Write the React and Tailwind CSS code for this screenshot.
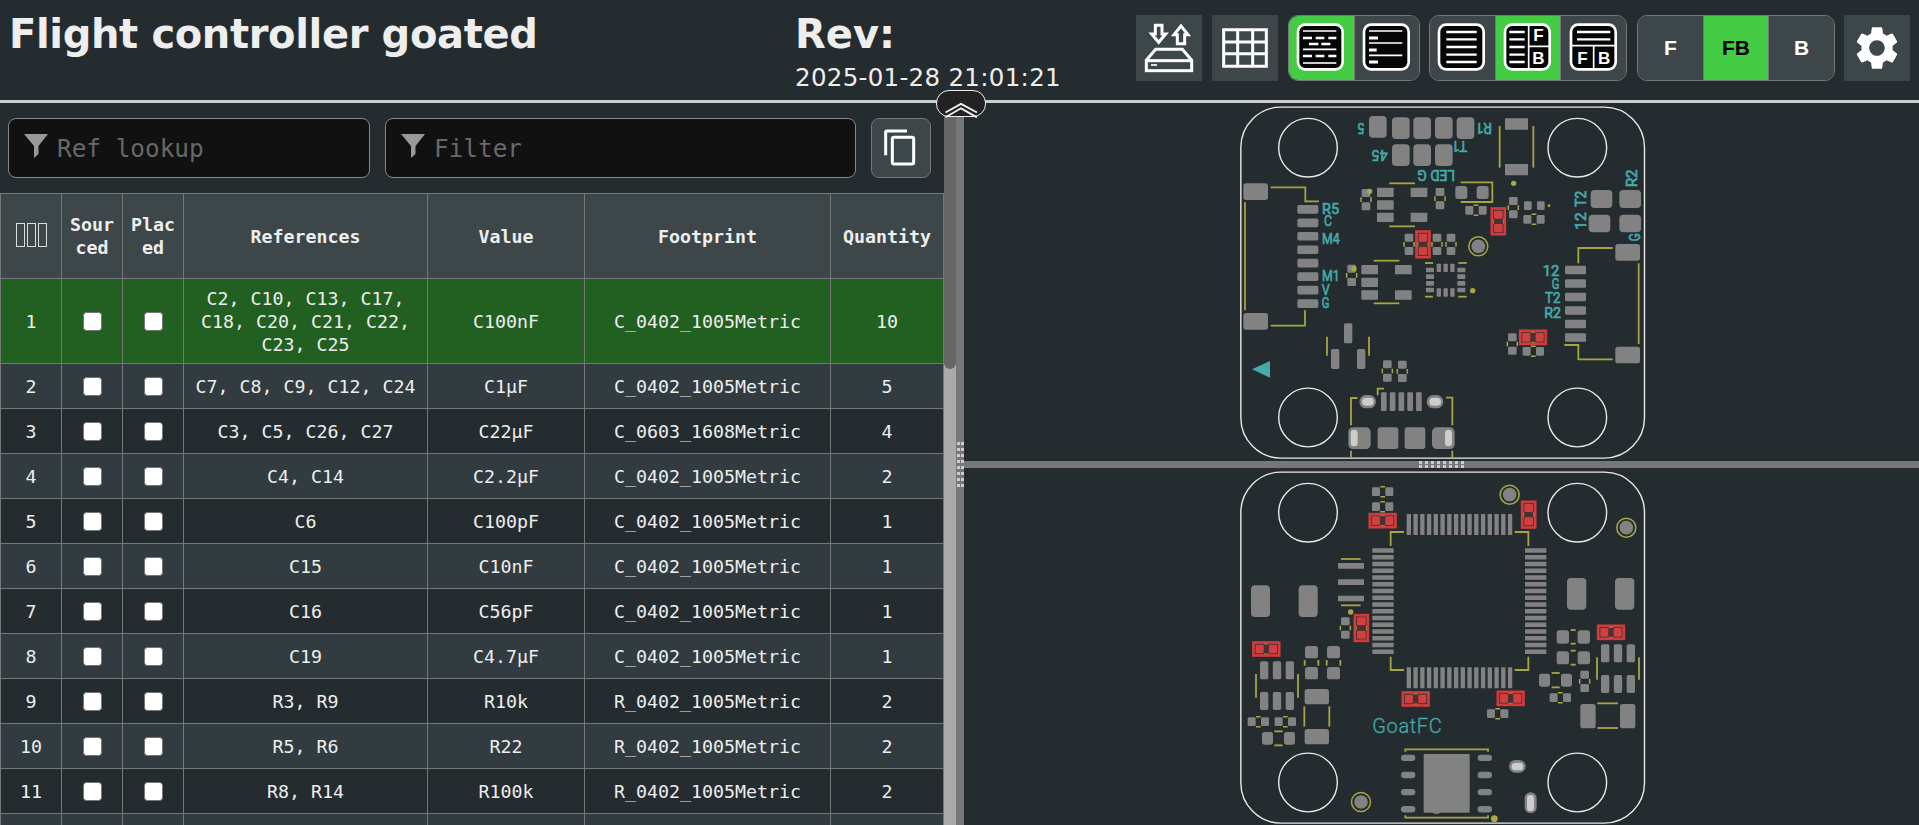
import { MdSettings } from "react-icons/md";

const rows = [
  ["C2, C10, C13, C17, C18, C20, C21, C22, C23, C25", "C100nF", "C_0402_1005Metric", 10],
  ["C7, C8, C9, C12, C24", "C1µF", "C_0402_1005Metric", 5],
  ["C3, C5, C26, C27", "C22µF", "C_0603_1608Metric", 4],
  ["C4, C14", "C2.2µF", "C_0402_1005Metric", 2],
  ["C6", "C100pF", "C_0402_1005Metric", 1],
  ["C15", "C10nF", "C_0402_1005Metric", 1],
  ["C16", "C56pF", "C_0402_1005Metric", 1],
  ["C19", "C4.7µF", "C_0402_1005Metric", 1],
  ["R3, R9", "R10k", "R_0402_1005Metric", 2],
  ["R5, R6", "R22", "R_0402_1005Metric", 2],
  ["R8, R14", "R100k", "R_0402_1005Metric", 2],
];

const range = (n, f) => Array.from({ length: n }, (_, i) => f(i));

/* Board data. Pads and holes: [x, y, w, h, radius]. Silk: polyline points. */
const front = {
  pads: [
    [417, 48, 53, 65, 12], [486, 52, 53, 65, 12], [550, 52, 53, 65, 12], [615, 51, 53, 65, 12], [680, 52, 53, 65, 12],
    [486, 133, 53, 65, 12], [550, 133, 53, 65, 12], [615, 133, 53, 65, 12],
    [40, 250, 74, 50, 8], [40, 639, 74, 50, 8],
    ...range(8, (i) => [202, 315 + i * 40.4, 63, 26, 5]),
    [441, 263, 50, 28, 2], [441, 301, 50, 28, 2], [441, 338, 50, 28, 2], [542, 263, 50, 28, 2], [542, 338, 50, 28, 2],
    [394, 495, 50, 28, 2], [394, 533, 50, 28, 2], [394, 571, 50, 28, 2], [495, 495, 50, 28, 2], [495, 571, 50, 28, 2],
    [882, 304, 23, 26, 4], [921, 304, 23, 26, 4],
    [676, 258, 36, 39, 8], [740, 258, 36, 39, 8],
    [825, 55, 69, 34, 1], [825, 192, 69, 34, 1],
    [1082, 270, 65, 54, 12], [1168, 270, 65, 54, 12], [1076, 344, 65, 53, 12], [1168, 344, 65, 53, 12],
    [1156, 432, 74, 50, 8], [1156, 740, 74, 50, 8],
    ...range(6, (i) => [1005, 497 + i * 40.5, 63, 26, 4]),
    ...range(4, (i) => [588, 503 + i * 20, 24, 14, 2]),
    ...range(4, (i) => [682, 503 + i * 20, 24, 14, 2]),
    ...range(3, (i) => [620 + i * 20.4, 491, 13, 25, 2]),
    ...range(3, (i) => [620 + i * 20.4, 565, 13, 25, 2]),
    [342, 670, 25, 60, 5], [303, 747, 25, 60, 5], [381, 747, 25, 60, 5],
    [388, 885, 50, 40, 20], [590, 885, 50, 40, 20],
    ...range(5, (i) => [453 + i * 26.3, 877, 17, 56, 3]),
    [355, 982, 67, 65, 14], [443, 982, 62, 65, 8], [524, 982, 62, 65, 8], [606, 982, 68, 65, 14],
  ],
  holes: [[396, 893, 35, 24, 12], [598, 893, 35, 24, 12], [362, 989, 21, 50, 10], [645, 989, 21, 50, 10]],
  silk: [
    "478,250 555,250", "478,379 555,379", "431,482 508,482", "431,610 508,610",
    "692,247 787,247 787,306 692,306",
    "809,78 809,203", "910,78 910,203",
    "1045,490 1045,444 1148,444", "1226,490 1226,732", "1003,735 1045,735 1045,778 1148,778",
    "122,262 226,262 226,304 267,304", "45,307 45,631", "225,631 225,677 122,677",
    "585,489 609,489", "685,489 710,489", "585,590 609,590", "685,590 710,590",
    "291,710 291,767", "417,710 417,767",
    "382,894 363,894 363,976", "363,1052 363,1072", "462,866 443,866 443,886",
    "648,893 667,893 667,976", "667,1052 667,1072",
  ],
  dots: [[419, 274, 8], [372, 506, 8], [957, 317, 4], [851, 250, 8], [728, 572, 8]],
  fiducials: [[745, 439]],
  vertical: [[408, 299], [365, 526], [537, 433], [621, 433], [663, 433], [630, 296], [850, 323], [472, 813], [517, 814], [847, 732]],
  horizontal: [[738, 331], [912, 358], [910, 754]],
  hotV: [[579, 433], [805, 364]],
  hotH: [[909, 712]],
};

const back = {
  pads: [
    ...range(16, (i) => [530 + i * 20.25, 147, 13, 63, 1]),
    ...range(16, (i) => [530 + i * 20.25, 607, 13, 63, 1]),
    ...range(16, (i) => [427, 250 + i * 20.25, 64, 13, 1]),
    ...range(16, (i) => [885, 250 + i * 20.25, 64, 13, 1]),
    [324, 294, 78, 17, 1], [324, 343, 78, 17, 1], [324, 392, 78, 17, 1],
    [63, 361, 57, 95, 12], [206, 361, 57, 95, 12],
    [225, 543, 39, 37, 8], [225, 606, 39, 37, 8], [291, 543, 39, 37, 8], [291, 606, 39, 37, 8],
    ...range(3, (i) => [90 + i * 38.5, 589, 25, 54, 5]),
    ...range(3, (i) => [90 + i * 38.5, 681, 25, 54, 5]),
    [96, 801, 33, 38, 7], [162, 801, 33, 38, 7],
    [224, 672, 73, 46, 8], [224, 792, 73, 46, 8],
    ...range(4, (i) => [513, 869 + i * 51.4, 43, 19, 9.5]),
    ...range(4, (i) => [743, 869 + i * 51.4, 43, 19, 9.5]),
    [581, 867, 138, 176, 0], [609, 1038, 20, 8, 4],
    [837, 885, 50, 38, 19], [884, 982, 36, 63, 18],
    [1011, 339, 58, 95, 12], [1155, 339, 58, 95, 12],
    [980, 496, 37, 40, 8], [1043, 496, 37, 40, 8], [980, 559, 37, 39, 8], [1043, 559, 37, 39, 8],
    [927, 626, 33, 39, 7], [993, 626, 33, 39, 7],
    ...range(3, (i) => [1113 + i * 38.5, 538, 25, 54, 5]),
    ...range(3, (i) => [1113 + i * 38.5, 630, 25, 54, 5]),
    [1051, 717, 46, 73, 8], [1170, 717, 46, 73, 8],
  ],
  holes: [[845, 893, 35, 23, 11], [891, 990, 21, 48, 10]],
  silk: [
    "522,201 482,201 482,243", "854,201 895,201 895,243", "482,575 482,615 522,615", "895,575 895,615 854,615",
    "333,282 392,282", "333,421 392,421",
    "224,585 224,602", "265,585 265,602", "290,585 290,602", "331,585 331,602",
    "78,627 78,698", "204,627 204,698", "133,799 158,799", "133,841 158,841",
    "223,724 223,785", "298,724 298,785",
    "526,860 526,853 774,853 774,860", "526,1051 526,1058 774,1058 774,1051",
    "1022,495 1037,495", "1022,536 1037,536", "1022,557 1037,557", "1022,599 1037,599",
    "965,624 989,624", "965,667 989,667",
    "1101,577 1101,644", "1227,577 1227,644", "1102,715 1164,715", "1102,789 1164,789",
  ],
  dots: [[362, 441, 8], [793, 1061, 10]],
  fiducials: [[393, 1011], [839, 89], [1189, 188]],
  vertical: [[346, 489], [1064, 649]],
  horizontal: [[458, 80], [458, 125], [85, 770], [166, 770], [803, 746], [991, 698]],
  hotV: [[394, 489], [896, 149]],
  hotH: [[458, 167], [109, 552], [557, 702], [842, 700], [1143, 502]],
};

/* Silkscreen labels: [text, left, baseline, width, rotation, x offset] */
const labels = [
  ["R5", 276, 341, 51, 0], ["C", 282, 377, 24, 0], ["M4", 276, 431, 53, 0], ["M1", 276, 543, 53, 0],
  ["V", 275, 585, 24, 0], ["G", 275, 624, 23, 0],
  ["12", 323, 528, 50, 0, 615], ["G", 350, 568, 23, 0, 615], ["T2", 330, 610, 46, 0, 615], ["R2", 328, 653, 50, 0, 615],
  ["5", 404, 69, 21, 180], ["45", 473, 151, 47, 180], ["LED G", 675, 210, 113, 180],
  ["R1", 171, 68, 49, 180, 615], ["T1", 97, 123, 46, 180, 615],
  ["R2", 606, 262, 54, -90, 615], ["T2", 454, 320, 48, -90, 615], ["12", 454, 389, 52, -90, 615], ["G", 616, 424, 24, -90, 615],
];

function Chip({ cx, cy, rot, hot }) {
  const c = hot ? "#d04040" : "#828282";
  return (
    <g transform={`translate(${cx} ${cy}) rotate(${rot})`}>
      {hot && <rect x="-19.5" y="-38.5" width="39" height="77" fill="#d04040" fillOpacity="0.22" stroke="#d03c3c" strokeWidth="8" />}
      <rect x="-13" y="-32" width="26" height="24" rx="4" fill={c} />
      <rect x="-13" y="8" width="26" height="24" rx="4" fill={c} />
      <path d="M-15 -7V7M15 -7V7" stroke="#a8a83f" strokeWidth={hot ? 3 : 4.5} opacity={hot ? 0.7 : 1} />
    </g>
  );
}

function Board({ data, children }) {
  return (
    <svg className="block h-full w-full" fill="none">
      <g transform="translate(266 -3) scale(0.33333)">
        {data.pads.map(([x, y, w, h, r], i) => (
          <rect key={i} x={x} y={y} width={w} height={h} rx={r} fill="#828282" />
        ))}
        {data.holes.map(([x, y, w, h, r], i) => (
          <rect key={i} x={x} y={y} width={w} height={h} rx={r} fill="#cccccc" />
        ))}
        {data.silk.map((p) => (
          <polyline key={p} points={p} stroke="#a6a63e" strokeWidth="5.4" />
        ))}
        {data.vertical.map(([x, y]) => <Chip key={x + "v" + y} cx={x} cy={y} rot={0} />)}
        {data.horizontal.map(([x, y]) => <Chip key={x + "h" + y} cx={x} cy={y} rot={90} />)}
        {data.hotV.map(([x, y]) => <Chip key={x + "v" + y} cx={x} cy={y} rot={0} hot />)}
        {data.hotH.map(([x, y]) => <Chip key={x + "h" + y} cx={x} cy={y} rot={90} hot />)}
        {data.dots.map(([x, y, r]) => <circle key={x} cx={x} cy={y} r={r} fill="#aaaa44" />)}
        {data.fiducials.map(([x, y]) => (
          <g key={x}>
            <circle cx={x} cy={y} r="20.5" fill="#828282" />
            <circle cx={x} cy={y} r="28.5" stroke="#a6a63e" strokeWidth="4.6" />
          </g>
        ))}
        <g stroke="#e9e9e9" strokeWidth="4.2">
          <rect x="32.5" y="21.5" width="1211" height="1053" rx="121" />
          <circle cx="234" cy="143" r="88" />
          <circle cx="1042" cy="143" r="88" />
          <circle cx="234" cy="952.5" r="88" />
          <circle cx="1042" cy="952.5" r="88" />
        </g>
        {children}
      </g>
    </svg>
  );
}

function IconFrame({ children }) {
  return (
    <svg viewBox="0 0 198 198" className="h-[66px] w-[66px] shrink-0" fill="none">
      <rect x="30" y="29" width="134" height="134" rx="21" fill="#060606" stroke="#fff" strokeWidth="8" />
      {children}
    </svg>
  );
}

function Seg({ active, last, children }) {
  return (
    <div
      className={
        "flex h-full min-w-0 flex-1 items-center justify-center overflow-hidden font-['Liberation_Sans',Arial,sans-serif] text-[21px] font-bold " +
        (active ? "bg-[#44cc44] text-black " : "bg-[#3d474a] text-white ") +
        (last ? "" : "border-r border-[#777]")
      }
    >
      {children}
    </div>
  );
}

const group = "flex h-[66px] overflow-hidden rounded-[10px] border border-[#777]";
const cell = "border-r border-b border-[#777] p-0 text-center align-middle";

function FilterBox({ text, className }) {
  return (
    <div className={"flex h-[60px] items-center rounded-[8px] border border-[#888] bg-[#111] pl-[15px] " + className}>
      <svg viewBox="0 0 24 24" className="mb-[4px] h-6 w-6 shrink-0">
        <path d="M0 0H24L14.5 12V20L10 24V12Z" fill="#999" />
      </svg>
      <span className="mt-[2px] ml-[9px] text-[24.36px] leading-none text-[#686868]">{text}</span>
    </div>
  );
}

function Check() {
  return <div className="mx-auto h-[19px] w-[19px] rounded-[3.5px] border border-[#767676] bg-white" />;
}

export default function App() {
  const heads = ["References", "Value", "Footprint", "Quantity"];
  return (
    <div className="flex h-[825px] w-[1919px] flex-col overflow-hidden bg-[#252c30] font-['DejaVu_Sans_Mono',monospace] text-[#eee]">
      <header className="flex h-[103px] shrink-0 border-b-[3px] border-[#ccc] pr-[9px] font-['DejaVu_Sans',Verdana,sans-serif]">
        <div className="w-[795px] shrink-0 pt-[10px] pl-[9px] text-[40px] leading-[48px] font-bold tracking-[-0.36px]">Flight controller goated</div>
        <div className="w-[341px] shrink-0 pt-[10px]">
          <div className="text-[40px] leading-[48px] font-bold">Rev:</div>
          <div className="mt-[5px] text-[24.5px] leading-[30px] tracking-[0.3px]">2025-01-28 21:01:21</div>
        </div>
        <div className="flex pt-[15px]">
          <div className="h-[66px] w-[66px] bg-[#3d474a]">
            <svg viewBox="0 0 198 198" fill="none" stroke="#fff" strokeWidth="9">
              <path d="M58 31H78V57H89L68 82L47 57H58Z" />
              <path d="M135 33L156 59H146V86H124V59H114Z" />
              <path d="M31 136L59 103H139L167 136" />
              <rect x="31" y="137" width="136" height="30" />
              <path d="M45 150H63" strokeWidth="5" />
            </svg>
          </div>
          <div className="ml-[10px] h-[66px] w-[66px] bg-[#3d474a]">
            <svg viewBox="0 0 198 198" fill="none" stroke="#fff" strokeWidth="9">
              <path d="M35 44.5H163V154H35ZM77 44V154M122 44V154M35 81H163M35 116H163" />
            </svg>
          </div>
          <div className={group + " ml-[10px] w-[132px]"}>
            <Seg active>
              <IconFrame>
                <path d="M45 48H145M45 103H145" stroke="#fff" strokeWidth="5" />
                <path d="M45 69H72M83 69H109M121 69H145M63 87H91M100 87H127M45 123H72M83 123H109M121 123H145" stroke="#fff" strokeWidth="8" />
                <path d="M45 144H145" stroke="#ccc" strokeWidth="6" />
              </IconFrame>
            </Seg>
            <Seg last>
              <IconFrame>
                <path d="M45 48H145M45 84H145M45 121H145" stroke="#fff" strokeWidth="5" />
                <path d="M45 69H72M45 105H68M45 141H72" stroke="#fff" strokeWidth="9" />
              </IconFrame>
            </Seg>
          </div>
          <div className={group + " ml-[9px] w-[198px]"}>
            <Seg>
              <IconFrame>
                <path d="M52 51H143M52 73H143M52 96H143M52 119H143M52 141H143" stroke="#fff" strokeWidth="7" />
              </IconFrame>
            </Seg>
            <Seg active>
              <IconFrame>
                <path d="M43 51H89M43 73H89M43 96H89M43 119H89M43 141H89" stroke="#fff" strokeWidth="7" />
                <path d="M101 30V162M101 94H163" stroke="#fff" strokeWidth="5" />
                <text x="115" y="79" fontSize="51" fill="#fff">F</text>
                <text x="112" y="147" fontSize="51" fill="#fff">B</text>
              </IconFrame>
            </Seg>
            <Seg last>
              <IconFrame>
                <path d="M48 51H148M48 73H148" stroke="#fff" strokeWidth="7" />
                <path d="M30 92H163M98 92V162" stroke="#fff" strokeWidth="5" />
                <text x="49" y="147" fontSize="51" fill="#fff">F</text>
                <text x="111" y="147" fontSize="51" fill="#fff">B</text>
              </IconFrame>
            </Seg>
          </div>
          <div className={group + " ml-[10px] w-[198px]"}>
            <Seg>F</Seg>
            <Seg active>FB</Seg>
            <Seg last>B</Seg>
          </div>
          <div className="ml-[9px] flex h-[66px] w-[66px] items-center justify-center bg-[#3d474a]">
            <MdSettings className="h-[52px] w-[52px] text-white" />
          </div>
        </div>
      </header>

      <main className="relative flex min-h-0 flex-1">
        <section className="w-[944px] shrink-0 overflow-hidden">
          <div className="flex h-[90px] items-center pl-2">
            <FilterBox text="Ref lookup" className="w-[362px]" />
            <FilterBox text="Filter" className="ml-[15px] w-[471px]" />
            <div className="ml-[15px] h-[60px] w-[60px] rounded-[8px] border border-[#777] bg-[#3d474a]">
              <svg viewBox="3 3 174 174" fill="none" stroke="#fff" strokeWidth="9">
                <path d="M44 112V42Q44 39 47 39H108" />
                <rect x="64" y="58" width="64" height="80" rx="5" />
              </svg>
            </div>
          </div>
          <table className="w-[944px] table-fixed border-separate border-spacing-0 border-t border-l border-[#777] text-[18.27px] leading-[23px]">
            <colgroup>
              <col className="w-[61px]" />
              <col className="w-[61px]" />
              <col className="w-[61px]" />
              <col className="w-[244px]" />
              <col className="w-[157px]" />
              <col className="w-[246px]" />
              <col className="w-[113px]" />
            </colgroup>
            <thead>
              <tr className="h-[85px] bg-[#3d474a]">
                <th className={cell}>
                  <div className="mb-[3px] flex justify-center gap-[2px]">
                    <span className="h-[24px] w-[9px] border border-[#ddd]" />
                    <span className="h-[24px] w-[9px] border border-[#ddd]" />
                    <span className="h-[24px] w-[9px] border border-[#ddd]" />
                  </div>
                </th>
                <th className={cell}>Sour<br />ced</th>
                <th className={cell}>Plac<br />ed</th>
                {heads.map((h) => <th key={h} className={cell}>{h}</th>)}
              </tr>
            </thead>
            <tbody>
              {rows.map(([refs, value, fp, qty], i) => (
                <tr key={refs} className={i === 0 ? "h-[85px] bg-[#226022]" : i % 2 ? "h-[45px] bg-[#313b40]" : "h-[45px] bg-[#252c30]"}>
                  <td className={cell}>{i + 1}</td>
                  <td className={cell}><Check /></td>
                  <td className={cell}><Check /></td>
                  <td className={cell + " px-[10px]"}>{refs}</td>
                  <td className={cell}>{value}</td>
                  <td className={cell}>{fp}</td>
                  <td className={cell}>{qty}</td>
                </tr>
              ))}
              <tr className="h-[45px] bg-[#313b40]">
                {range(7, (i) => <td key={i} className={cell} />)}
              </tr>
            </tbody>
          </table>
        </section>

        <div className="w-3 shrink-0 bg-[#aaa]">
          <div className="h-[266px] rounded-b-[6px] bg-[#666]" />
        </div>
        <div className="flex w-2 shrink-0 items-center justify-center bg-[#777]">
          <div className="grid grid-cols-2 gap-x-px gap-y-[3px]">
            {range(16, (i) => <span key={i} className="h-[3px] w-[3px] bg-[#ccc]" />)}
          </div>
        </div>

        <section className="flex min-w-0 flex-1 flex-col">
          <div className="h-[358px] shrink-0 overflow-hidden">
            <Board data={front}>
              <path d="M66 808L120 783V833Z" fill="#44aaaa" />
              {labels.map(([t, x, y, w, rot, dx = 0], i) => (
                <text
                  key={i}
                  transform={`translate(${x + dx} ${y}) rotate(${rot})`}
                  textLength={w}
                  lengthAdjust="spacingAndGlyphs"
                  fontSize="45"
                  fill="#44aaaa"
                  stroke="#44aaaa"
                  strokeWidth="2"
                  className="font-['Roboto',sans-serif]"
                >
                  {t}
                </text>
              ))}
            </Board>
          </div>
          <div className="flex h-[7px] shrink-0 items-center justify-center bg-[#777]">
            <div className="grid grid-cols-8 gap-x-[3px] gap-y-px">
              {range(16, (i) => <span key={i} className="h-[3px] w-[3px] bg-[#ccc]" />)}
            </div>
          </div>
          <div className="min-h-0 flex-1 overflow-hidden">
            <Board data={back}>
              <text x="427" y="805" textLength="208" fontSize="60" fill="#44aaaa" stroke="#44aaaa" strokeWidth="0.8" className="font-['Roboto',sans-serif] font-light">
                GoatFC
              </text>
            </Board>
          </div>
        </section>

        <div className="absolute top-[-13px] left-[936px] h-[27px] w-[50px] rounded-[13px] border border-[#eee] bg-[#222]">
          <svg viewBox="0 0 50 30" className="absolute top-[-1px] left-[-1px] h-[30px] w-[50px]" fill="none" stroke="#eee" strokeWidth="1.9">
            <path d="M9.5 22.5L25 13.8L41 22.5M9.5 27.3L25 18.3L41 27.3" />
          </svg>
        </div>
      </main>
    </div>
  );
}
